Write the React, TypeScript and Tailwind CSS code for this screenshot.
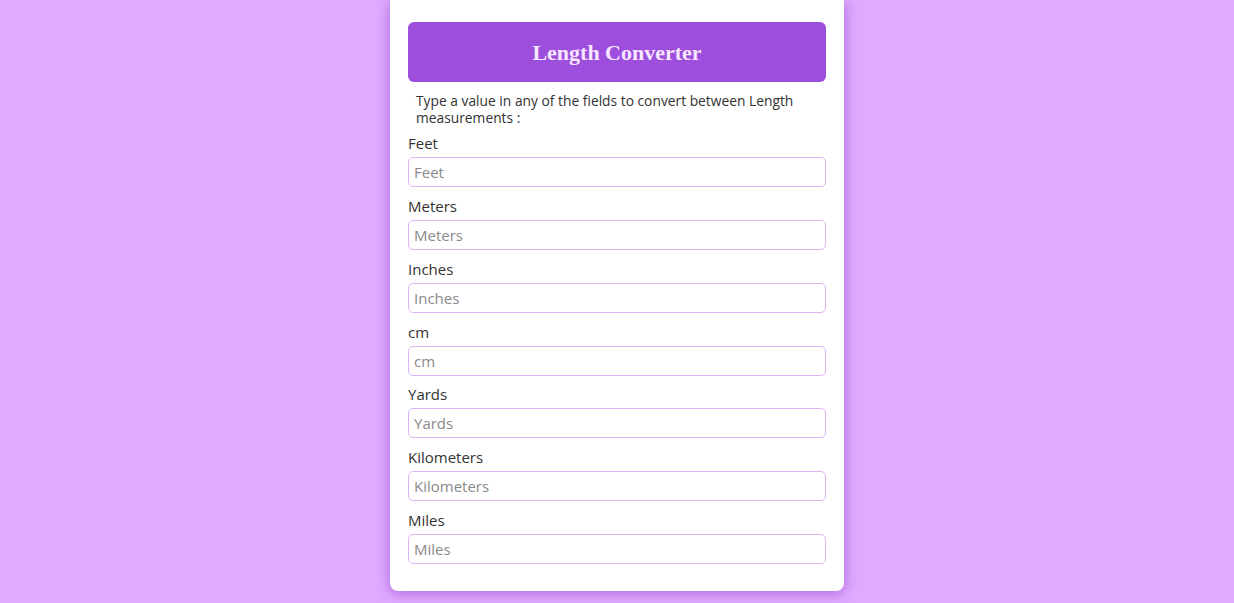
import React from "react";

const units = ["Feet", "Meters", "Inches", "cm", "Yards", "Kilometers", "Miles"];

export default function App() {
  return (
    <div className="min-h-[603px] w-full bg-[#e0aaff] flex justify-center" style={{ fontFamily: '"Open Sans", "Noto Sans", sans-serif' }}>
      <div className="w-[454px] h-[591px] bg-white rounded-b-lg shadow-[0_2px_14px_rgba(123,44,191,0.55)] px-[18px] pt-[22px]">
        <div className="h-[60px] rounded-md bg-[#9d4edd] flex items-center justify-center pt-[1px]">
          <h1 className="text-[22px] font-bold text-[#f6e6ff]" style={{ fontFamily: '"Liberation Serif", serif' }}>Length Converter</h1>
        </div>
        <p className="mt-[10px] ml-[8px] w-[400px] text-[13.8px] leading-[17px] text-[#333]">
          Type a value in any of the fields to convert between Length measurements :
        </p>
        <div className="mt-[7px] flex flex-col">
          {units.map((u) => (
            <div key={u} className="mb-[8.85px]">
              <label className="block text-[15px] leading-[20px] text-[#333]">{u}</label>
              <input
                placeholder={u}
                className="mt-[4px] block w-full h-[30px] rounded-[5px] border border-[#dcb6f3] px-[5px] text-[15px] text-[#333] placeholder:text-[#8a8a8a] outline-none"
              />
            </div>
          ))}
        </div>
      </div>
    </div>
  );
}
